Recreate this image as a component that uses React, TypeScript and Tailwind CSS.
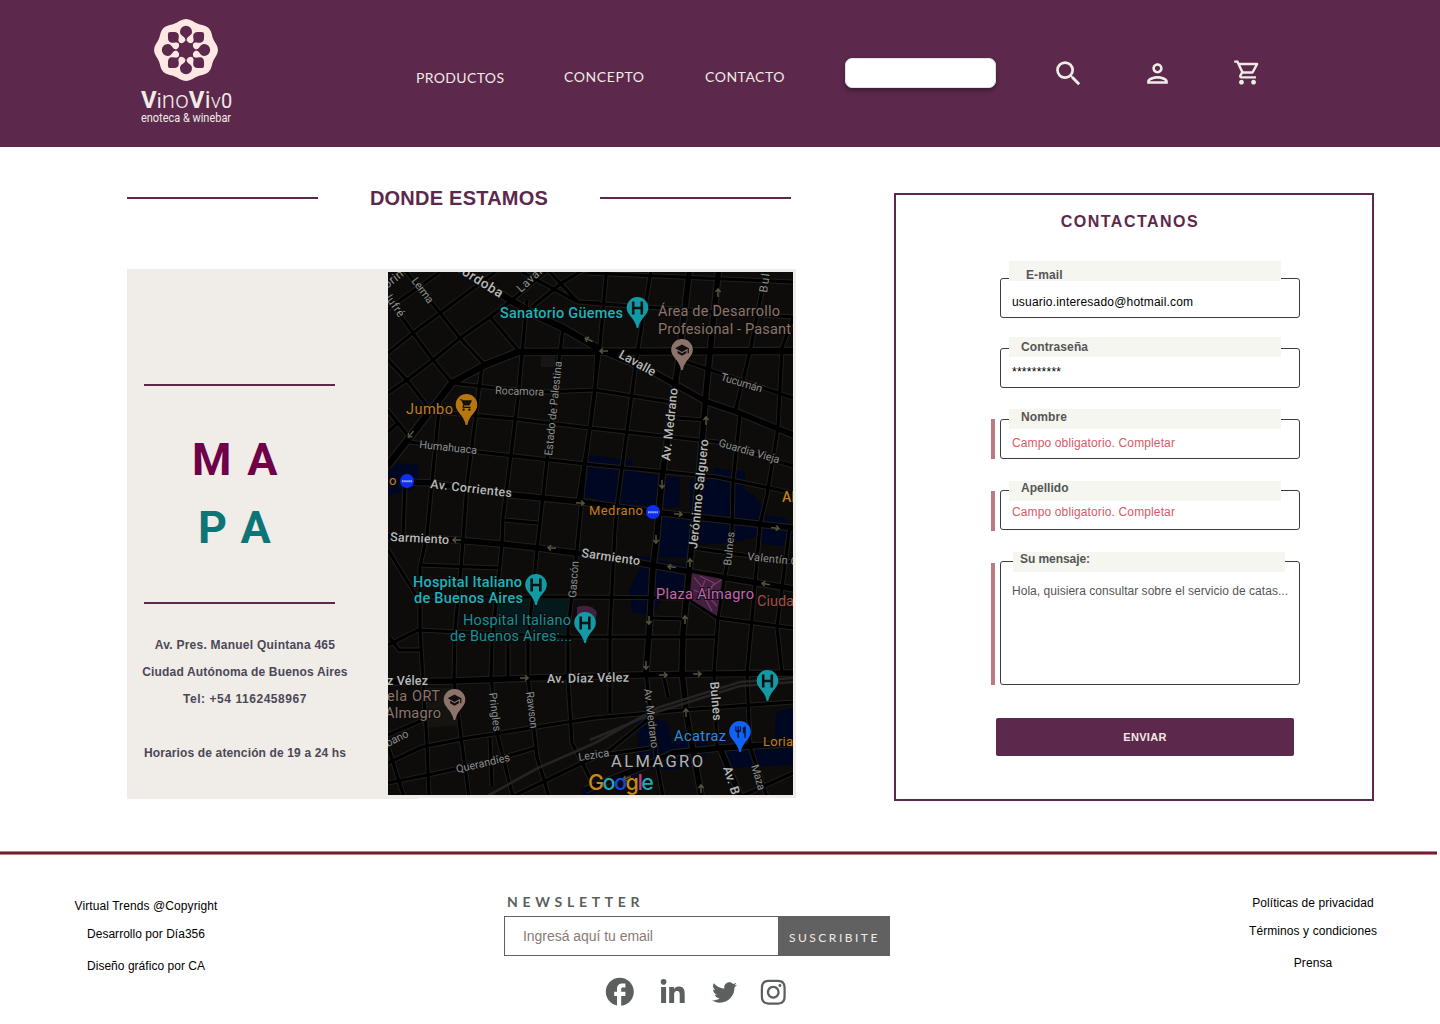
import type { ReactNode } from "react";
import {
  MdFacebook,
  MdOutlinePerson,
  MdOutlineShoppingCart,
  MdRestaurant,
  MdSchool,
  MdSearch,
  MdShoppingCart,
} from "react-icons/md";
import { FaInstagram, FaLinkedinIn, FaTwitter } from "react-icons/fa";

/* ---------- Logo ---------- */

const SPOKES = [0, 45, 90, 135, 180, 225, 270, 315];

const scallop = Array.from({ length: 144 }, (_, i) => {
  const a = (i * Math.PI) / 72;
  const r = 30.7 + 1.2 * Math.cos(8 * a);
  return `${(r * Math.cos(a)).toFixed(2)},${(r * 0.97 * Math.sin(a)).toFixed(2)}`;
}).join(" ");

function Flower() {
  return (
    <svg width="66" height="66" viewBox="-33 -33 66 66">
      <polygon points={scallop} fill="#ffe8e4" />
      <g fill="#5c284c" stroke="none">
        <circle r="9.3" />
        {SPOKES.map((d) => (
          <g key={d} transform={`rotate(${d})`}>
            <rect x="-0.7" y="-14" width="1.4" height="7" />
            {d % 90 === 0 ? (
              <path d="M0 -24.2A6 6 0 0 1 6 -18.2C6 -14 1.6 -14 .7 -11H-.7C-1.6 -14 -6 -14 -6 -18.2A6 6 0 0 1 0 -24.2Z" />
            ) : (
              <path d="M0 -24.6Q1 -24.6 2 -23.6L5 -20.4Q7 -17.6 5 -15.2C3.6 -13.4 1.6 -13 .7 -11H-.7C-1.6 -13 -3.6 -13.4 -5 -15.2Q-7 -17.6 -5 -20.4L-2 -23.6Q-1 -24.6 0 -24.6Z" />
            )}
          </g>
        ))}
      </g>
      {SPOKES.map((d) => (
        <circle key={d} cy="-10.8" r="3" fill="#ffe8e4" transform={`rotate(${d + 22.5})`} />
      ))}
    </svg>
  );
}

/* ---------- Map ---------- */

const MAIN_ROADS = [
  "M455 265L502 295L535 315L563 328L598 348",
  "M388 465L410 437L452 383L485 365L518 352L793 351",
];

const AVENUES = [
  "M598 349L653 372L707 402L737 412L793 435",
  "M690 265L685 308L678 365L662 478L657 535L653 567L650 620L646 673",
  "M719 265L707 382L700 465L690 563L683 633L682 673L687 717L702 800",
  "M405 482L432 483L512 495L582 502L653 512L793 528",
  "M380 536L455 540L502 544L538 548L590 555L640 563L690 572L800 590",
  "M380 682L452 681L532 678L637 675L793 673",
  "M585 790L640 768L673 753L720 748L800 743",
  "M720 748L742 800",
];

const STREETS = [
  "M405 270L440 313L460 338L485 365",
  "M388 298L413 333L433 360L452 383",
  "M388 353L413 333L440 313L498 270",
  "M388 393L407 380L433 360L460 338L490 317L512 300L548 270",
  "M385 357L407 380L428 407",
  "M490 317L518 350",
  "M385 407L410 438",
  "M388 432L398 423",
  "M388 309L440 272",
  "M522 272L578 302",
  "M546 268L578 302L600 303",
  "M532 307L563 282L592 265",
  "M527 300L518 398L503 518L502 544L492 643L491 677L498 737L513 797",
  "M563 328L560 352L547 460L537 550L528 640L528 677L537 757L549 797",
  "M482 366L467 485L461 567L455 630L454 680L462 745L469 797",
  "M440 398L427 535L420 567L420 630L423 680L427 743L429 797",
  "M405 485L403 536",
  "M597 348L595 390L585 465L577 550L568 630L568 680L572 743L592 782",
  "M452 383L495 388L545 392L595 390L670 402",
  "M428 411L515 419L590 428L717 442L793 466",
  "M410 442L478 452L595 465L717 477L793 493",
  "M505 520L538 523",
  "M420 565L498 568",
  "M388 550L417 597L568 597L690 598",
  "M388 645L418 630L458 632L568 637L715 637",
  "M388 763L422 747L462 739L568 722L595 718L683 710L793 702",
  "M388 783L428 775L495 760L535 748",
  "M385 737L404 797",
  "M390 638L399 650L420 650",
  "M508 643L508 677",
  "M490 738L492 786",
  "M512 797L578 765L610 750L653 715",
  "M388 735L423 720",
  "M607 265L600 345L590 428L578 502",
  "M652 265L638 348L618 498L615 530L610 630L610 713",
  "M588 273L793 282",
  "M588 303L793 317",
  "M767 265L750 352L735 412",
  "M793 318L782 348L778 428L767 495L760 525L752 620L747 673L750 747L767 797",
  "M740 415L733 482L732 535L718 617L714 673L717 748",
  "M687 362L793 398",
  "M677 418L705 420",
  "M790 525L777 627L782 673",
  "M693 548L793 562",
  "M690 600L717 618L793 628",
  "M650 618L685 619",
  "M646 673L657 763L663 797",
  "M590 757L650 748",
  "M740 797L793 773",
  "M664 678L668 697",
];

const RAILS = ["M482 799L538 768L595 743L657 708L740 682L793 678", "M590 740L657 712L740 686L793 682"];

const WATER = [
  "M588 455L632 460L635 472L680 478L679 508L597 503L595 498L583 497L584 482L588 480Z",
  "M388 472L398 463L418 465L420 485L408 492L388 495Z",
  "M714 468L745 472L745 490L755 497L768 515L785 518L793 526L793 540L765 535L735 542L690 546L690 480L712 478Z",
  "M657 515L695 520L689 558L633 556L640 568L629 590L632 612L652 616L665 595L686 590L690 565L655 560Z",
  "M762 530L785 532L785 546L762 544Z",
  "M636 715L668 722L672 745L700 735L712 747L700 765L670 770L640 768Z",
  "M776 712L793 708L793 765L725 768L728 750L774 744Z",
  "M582 787L594 787L594 795L582 795Z",
];

function Pin({ x, y, color, children }: { x: number; y: number; color: string; children: ReactNode }) {
  return (
    <g transform={`translate(${x} ${y})`}>
      <path d="M0 -11A10.8 10.8 0 0 1 10.8 0C10.8 7 2.6 10 .8 20H-.8C-2.6 10 -10.8 7 -10.8 0A10.8 10.8 0 0 1 0 -11Z" fill={color} />
      {children}
    </g>
  );
}

function HospitalPin({ x, y }: { x: number; y: number }) {
  return (
    <Pin x={x} y={y} color="#129aa5">
      <path d="M-4.3 -6.5V6.5M4.3 -6.5V6.5M-4.3 0H4.3" stroke="#0b1213" strokeWidth="2.6" />
    </Pin>
  );
}

type Label = [text: string, x: number, y: number, width: number, size: number, color: string, angle?: number, weight?: number];

const ROAD = "#8f8f8f";
const AVE = "#b9b9b9";
const TEAL = "#1fb2bb";
const BROWN = "#8c746b";
const GOLD = "#c07d1b";

const LABELS: Label[] = [
  ["Cordoba", 453, 269, 55, 13.5, AVE, 32, 500],
  ["orin", 387, 289, 22, 12, ROAD, -38],
  ["Jufré", 383, 295, 28, 11.5, ROAD, 55],
  ["Lerma", 411, 281, 29, 11, ROAD, 53],
  ["Lavalle", 521, 293, 40, 11.5, ROAD, -43],
  ["Sanatorio Güemes", 500, 318, 123, 14.5, TEAL, 0, 500],
  ["Área de Desarrollo", 658, 316, 122, 14.5, BROWN],
  ["Profesional - Pasant", 658, 334, 133, 14.5, BROWN],
  ["Lavalle", 618, 357, 40, 12.5, AVE, 29, 500],
  ["Rocamora", 495, 394, 49, 11, ROAD, 2],
  ["Estado de Palestina", 552, 456, 95, 11, ROAD, -84],
  ["Tucumán", 720, 380, 43, 11, ROAD, 17],
  ["Guardia Vieja", 718, 446, 63, 11, ROAD, 16],
  ["Buln", 767, 293, 27, 11.5, ROAD, -82],
  ["Jumbo", 406, 414, 47, 14.5, GOLD],
  ["Humahuaca", 419, 448, 58, 11, ROAD, 6],
  ["Av. Medrano", 670, 461, 73, 12.5, AVE, -84, 500],
  ["Jerónimo Salguero", 697, 549, 110, 12.5, AVE, -84, 500],
  ["Av. Corrientes", 430, 488, 82, 12.5, AVE, 6.5, 500],
  ["Medrano", 589, 515, 54, 13, GOLD],
  ["Al", 782, 502, 13, 14, GOLD, 0, 500],
  ["o", 389, 485, 8, 13, GOLD],
  ["Sarmiento", 390, 541, 59, 12.5, AVE, 3, 500],
  ["Sarmiento", 581, 557, 59, 12.5, AVE, 8, 500],
  ["Gascón", 576, 598, 37, 11, ROAD, -86],
  ["Bulnes", 731, 566, 34, 11, ROAD, -84],
  ["Valentín G", 747, 560, 51, 11, ROAD, 6],
  ["Hospital Italiano", 413, 587, 109, 14.5, TEAL, 0, 500],
  ["de Buenos Aires", 414, 603, 109, 14.5, TEAL, 0, 500],
  ["Hospital Italiano", 463, 625, 108, 14.5, "#178f97"],
  ["de Buenos Aires:...", 450, 641, 122, 14.5, "#178f97"],
  ["Plaza Almagro", 656, 599, 98, 14.5, "#c465b5"],
  ["Ciuda", 757, 606, 37, 14.5, "#a34d47"],
  ["z Vélez", 387, 685, 41, 12.5, AVE, 0, 500],
  ["ela ORT", 387, 701, 53, 14.5, BROWN],
  ["Almagro", 385, 718, 56, 14.5, BROWN],
  ["Av. Díaz Vélez", 547, 683, 82, 12.5, AVE, -1, 500],
  ["Pringles", 489, 693, 39, 11, ROAD, 83],
  ["Rawson", 526, 692, 37, 11, ROAD, 83],
  ["Av. Medrano", 644, 689, 60, 11, ROAD, 83],
  ["Bulnes", 710, 682, 39, 12.5, AVE, 85, 500],
  ["bano", 388, 747, 24, 11, ROAD, -27],
  ["Querandíes", 457, 773, 55, 11, ROAD, -13],
  ["Lezica", 579, 761, 31, 11, ROAD, -9],
  ["ALMAGRO", 611, 767, 92, 16.5, "#b2b2b2"],
  ["Acatraz", 674, 741, 52, 14.5, "#3388e6"],
  ["Loria", 763, 746, 30, 13, GOLD],
  ["Av. B", 723, 768, 29, 12.5, AVE, 72, 500],
  ["Maza", 751, 766, 26, 11, ROAD, 73],
];

const ARROWS: [number, number, number][] = [
  [589, 340, 205], [604, 351, 180], [718, 293, 270], [706, 421, 270], [662, 484, 90],
  [678, 514, 5], [775, 528, 8], [580, 503, 5], [411, 434, 130], [457, 540, 180],
  [552, 548, 185], [656, 539, 90], [690, 563, 270], [672, 567, 188], [766, 584, 190],
  [649, 620, 90], [685, 620, 270], [646, 665, 90], [663, 675, 0], [697, 674, 0],
  [524, 678, 0], [686, 713, 270], [701, 789, 270], [627, 778, 160],
];

function Roads({ paths, width }: { paths: string[]; width: number }) {
  return (
    <g fill="none" strokeLinejoin="round">
      {paths.map((d) => (
        <path key={d} d={d} stroke="#000" strokeWidth={width} />
      ))}
    </g>
  );
}

function CityMap() {
  const edges = (paths: string[], width: number) =>
    paths.map((d) => <path key={d} d={d} fill="none" stroke="#20201e" strokeWidth={width} />);
  return (
    <svg className="block" width="405" height="523" viewBox="388 272 405 523" fontFamily="Roboto, sans-serif">
      <rect x="388" y="272" width="405" height="523" fill="#0d0c0b" />
      {WATER.map((d) => (
        <path key={d} d={d} fill="#000722" />
      ))}
      <path d="M495 600H568V634H494Z" fill="#03191c" />
      <path d="M577 607Q590 603 597 612L595 622H577Z" fill="#42203e" />
      <path d="M425 688H455L459 725L426 728Z" fill="#151411" />
      <path d="M541 355H555V367H541Z" fill="#171614" />
      {edges(STREETS, 5)}
      {edges(AVENUES, 7.5)}
      {edges(MAIN_ROADS, 8.5)}
      <Roads paths={STREETS} width={3.2} />
      <Roads paths={AVENUES} width={5.4} />
      <Roads paths={MAIN_ROADS} width={6.4} />
      {RAILS.map((d) => (
        <path key={d} d={d} fill="none" stroke="#262422" strokeWidth="2.6" />
      ))}
      <path d="M692 573L722 579L717 616L690 599Z" fill="#42203e" />
      <path d="M694 577L705 591L721 580M700 576L714 583L706 600L712 611M694 590L708 596L717 606M705 580L700 594" fill="none" stroke="#7c3c73" strokeWidth="1.2" />
      {ARROWS.map(([x, y, a]) => (
        <path key={`${x}-${y}`} d="M-4 0H3M1 -2.6L4 0L1 2.6" fill="none" stroke="#56533d" strokeWidth="1.5" transform={`translate(${x} ${y}) rotate(${a})`} />
      ))}
      {LABELS.map(([text, x, y, w, size, color, angle = 0, weight = 400]) => (
        <text
          key={`${text}-${x}-${y}`}
          transform={`translate(${x} ${y}) rotate(${angle})`}
          fontSize={size}
          fontWeight={weight}
          fill={color}
          textLength={w}
          stroke="#0b0b0a"
          strokeWidth="2"
          paintOrder="stroke"
        >
          {text}
        </text>
      ))}
      <text x="588" y="790" fontSize="21.5" fontWeight="500" textLength="66" fontFamily="Inter, sans-serif">
        <tspan fill="#c98812">G</tspan>
        <tspan fill="#1fa9b5">o</tspan>
        <tspan fill="#1644e6">o</tspan>
        <tspan fill="#c98812">g</tspan>
        <tspan fill="#a93f9a">l</tspan>
        <tspan fill="#1fa9b5">e</tspan>
      </text>
      {[[407, 481], [653, 512]].map(([x, y]) => (
        <g key={x}>
          <circle cx={x} cy={y} r="7" fill="#0c2ff0" />
          <path d={`M${x - 5} ${y + 0.3}H${x + 5}`} fill="none" stroke="#9fb0ff" strokeWidth="2" strokeDasharray="1.6 .5" />
        </g>
      ))}
      <HospitalPin x={637.5} y={308} />
      <HospitalPin x={536} y={585} />
      <HospitalPin x={585} y={623} />
      <HospitalPin x={767.5} y={681} />
      <Pin x={682} y={350} color={BROWN}>
        <MdSchool x={-7.5} y={-7.5} size={15} color="#12100f" />
      </Pin>
      <Pin x={454.5} y={700} color={BROWN}>
        <MdSchool x={-7.5} y={-7.5} size={15} color="#12100f" />
      </Pin>
      <Pin x={466.5} y={405} color="#b8760e">
        <MdShoppingCart x={-7} y={-7} size={14} color="#12100f" />
      </Pin>
      <Pin x={740} y={732} color="#0f62f5">
        <MdRestaurant x={-6.5} y={-7} size={14} color="#0b1530" />
      </Pin>
    </svg>
  );
}

/* ---------- Form ---------- */

function Field({ bar, box, tag, label, children }: { bar?: string; box: string; tag: string; label: string; children: ReactNode }) {
  return (
    <div className="flex">
      <div className={`w-1 shrink-0 ${bar ?? ""}`} />
      <div className={`relative ml-[5px] w-[300px] rounded-[3px] border border-[#3b3b40] pl-[11px] text-xs leading-4 whitespace-nowrap ${box}`}>
        <div className={`absolute h-5 w-[272px] bg-[#f6f6f0] font-bold text-[#555555] ${tag}`}>{label}</div>
        {children}
      </div>
    </div>
  );
}

export default function App() {
  return (
    <div className="h-[1024px] w-[1440px] overflow-hidden bg-white font-['Liberation_Sans',sans-serif] text-black">
      <header className="flex h-[147px] items-start bg-[#5c284c] text-[#f0ebe5]">
        <div className="mt-[17px] ml-[141px] flex w-[92px] flex-col font-['Roboto',sans-serif] whitespace-nowrap">
          <div className="ml-3">
            <Flower />
          </div>
          <div className="mt-[3px] flex h-[25px] items-baseline text-2xl leading-7 font-light tracking-[0.15px]">
            <span className="font-bold">V</span>
            <span className="text-xl leading-7 font-normal">i</span>
            <span>no</span>
            <span className="font-bold">V</span>
            <span className="font-normal">i</span>
            <span className="text-[21px] leading-7">v</span>
            <span className="text-xl leading-7 font-normal">0</span>
          </div>
          <div className="-mt-px origin-left scale-x-[0.843] text-[13px] leading-4">enoteca &amp; winebar</div>
        </div>
        <nav className="mt-[69px] ml-[183px] flex font-['Lato',sans-serif] text-sm leading-4 whitespace-nowrap">
          <a className="mt-px w-[148px] tracking-[0.35px]">PRODUCTOS</a>
          <a className="w-[141px] tracking-[0.58px]">CONCEPTO</a>
          <a className="w-[140px] tracking-[0.51px]">CONTACTO</a>
        </nav>
        <div className="mt-[58px] h-[30px] w-[151px] rounded-[7px] border border-[#dfe3ec] bg-white shadow-[0_3px_4px_rgba(0,0,0,0.3)]" />
        <MdSearch className="mt-[56.5px] ml-[56px]" size={33} />
        <MdOutlinePerson className="mt-[58px] ml-[57px]" size={31} />
        <MdOutlineShoppingCart className="mt-[58px] ml-[60px]" size={29} />
      </header>

      <main className="flex h-[704px] items-start">
        <section className="mt-[37px] ml-[127px] w-[669px]">
          <div className="flex h-7 items-center">
            <div className="h-0.5 w-[191px] bg-[#5c284c]" />
            <h1 className="w-[282px] text-center text-xl leading-7 font-bold tracking-[0.23px] text-[#5c284c]">DONDE ESTAMOS</h1>
            <div className="h-0.5 w-[191px] bg-[#5c284c]" />
          </div>
          <div className="mt-[57px] flex h-[529px] bg-[#f0ece7]">
            <div className="w-[261px]">
              <div className="mt-[115px] ml-[17px] h-0.5 w-[191px] bg-[#5c284c]" />
              <div className="mt-10 font-['Roboto',sans-serif] text-[45px] leading-[68px] font-bold whitespace-nowrap">
                <div className="pl-[65px] tracking-[15.5px] text-[#6e0148]">MA</div>
                <div className="pl-[71px] tracking-[17px] text-[#0d7577]">PA</div>
              </div>
              <div className="mt-10 ml-[17px] h-0.5 w-[191px] bg-[#5c284c]" />
              <div className="mt-7 w-[236px] text-center text-xs leading-[27px] font-bold whitespace-nowrap text-[#4a4858]">
                <p className="tracking-[0.24px]">Av. Pres. Manuel Quintana 465</p>
                <p className="tracking-[0.16px]">Ciudad Autónoma de Buenos Aires</p>
                <p className="tracking-[0.55px]">Tel: +54 1162458967</p>
                <p className="mt-[27px] tracking-[0.14px]">Horarios de atención de 19 a 24 hs</p>
              </div>
            </div>
            <div className="mt-[3px]">
              <CityMap />
            </div>
          </div>
          <div className="h-px w-[291px] bg-[#f0ece7]" />
        </section>

        <section className="mt-[46px] ml-[98px] h-[608px] w-[480px] border-2 border-[#5c284c]">
          <h2 className="mt-[15px] w-[468px] text-center text-base leading-6 font-bold tracking-[1.49px] text-[#5c284c]">CONTACTANOS</h2>
          <form className="mt-11 ml-[95px] flex flex-col">
            <Field box="h-10 pt-[15px]" tag="-top-[18px] left-2 pt-[6px] pl-[17px] tracking-[0.1px]" label="E-mail">
              <span className="tracking-[0.19px]">usuario.interesado@hotmail.com</span>
            </Field>
            <div className="h-[30px]" />
            <Field box="h-10 pt-[15px]" tag="-top-[12px] left-2 pt-[2px] pl-3 tracking-[0.11px]" label="Contraseña">
              <span className="tracking-[0.26px]">**********</span>
            </Field>
            <div className="h-[31px]" />
            <Field bar="bg-[#bb7a80]" box="h-10 pt-[15px]" tag="-top-[11px] left-2 pl-3 tracking-[0.13px]" label="Nombre">
              <span className="tracking-[0.13px] text-[#d65a68]">Campo obligatorio. Completar</span>
            </Field>
            <div className="h-[31px]" />
            <Field bar="mt-px -mb-px bg-[#bb7a80]" box="h-10 pt-[13px]" tag="-top-[10px] left-2 pl-3 leading-[14px] tracking-[0.02px]" label="Apellido">
              <span className="tracking-[0.13px] text-[#d65a68]">Campo obligatorio. Completar</span>
            </Field>
            <div className="h-[31px]" />
            <Field bar="mt-0.5 bg-[#bb7a80]" box="h-[124px] pt-[21px]" tag="-top-[10px] left-3 pl-[7px] leading-[14px] tracking-[-0.07px]" label="Su mensaje:">
              <span className="tracking-[0.035px] text-[#555555]">Hola, quisiera consultar sobre el servicio de catas...</span>
            </Field>
            <button type="button" className="mt-[33px] ml-[5px] h-[38px] w-[298px] rounded-[2px] bg-[#5c284c] text-[11px] font-bold tracking-[0.29px] text-[#f0ebe5]">
              ENVIAR
            </button>
          </form>
        </section>
      </main>

      <footer>
        <div className="h-1 w-[1437px] border-y border-[#b5868f] bg-[#731d2d]" />
        <div className="flex items-start text-xs leading-4">
          <div className="mt-[43px] ml-[46px] w-[200px] text-center">
            <p className="tracking-[0.09px]">Virtual Trends @Copyright</p>
            <p className="mt-3 tracking-[0.03px]">Desarrollo por Día356</p>
            <p className="mt-4 tracking-[0.03px]">Diseño gráfico por CA</p>
          </div>
          <div className="mt-[39px] ml-[258px] w-[386px]">
            <p className="pl-[3px] font-['Lato',sans-serif] text-sm leading-4 font-bold tracking-[4.7px] text-[#5b5f5d]">NEWSLETTER</p>
            <div className="mt-[6px] flex h-10 border border-[#616161]">
              <div className="w-[273px] pl-[18px] text-sm leading-[38px] tracking-[-0.04px] text-[#8a7a75]">Ingresá aquí tu email</div>
              <div className="w-[111px] bg-[#616161] pl-[11px] font-['Lato',sans-serif] leading-[42px] tracking-[2.5px] text-[#f0ebe5]">SUSCRIBITE</div>
            </div>
            <div className="mt-[19px] ml-[99px] flex items-start text-[#5b5f5d]">
              <MdFacebook size={33.6} />
              <FaLinkedinIn className="mt-[3.5px] ml-[22px]" size={27.4} />
              <FaTwitter className="mt-[5px] ml-[26px]" size={25} />
              <FaInstagram className="mt-[3.2px] ml-[22.5px]" size={28.5} />
            </div>
          </div>
          <div className="mt-10 ml-[323px] w-[200px] text-center">
            <p className="tracking-[0.065px]">Políticas de privacidad</p>
            <p className="mt-3 tracking-[0.09px]">Términos y condiciones</p>
            <p className="mt-4 tracking-[0.1px]">Prensa</p>
          </div>
        </div>
      </footer>
    </div>
  );
}
